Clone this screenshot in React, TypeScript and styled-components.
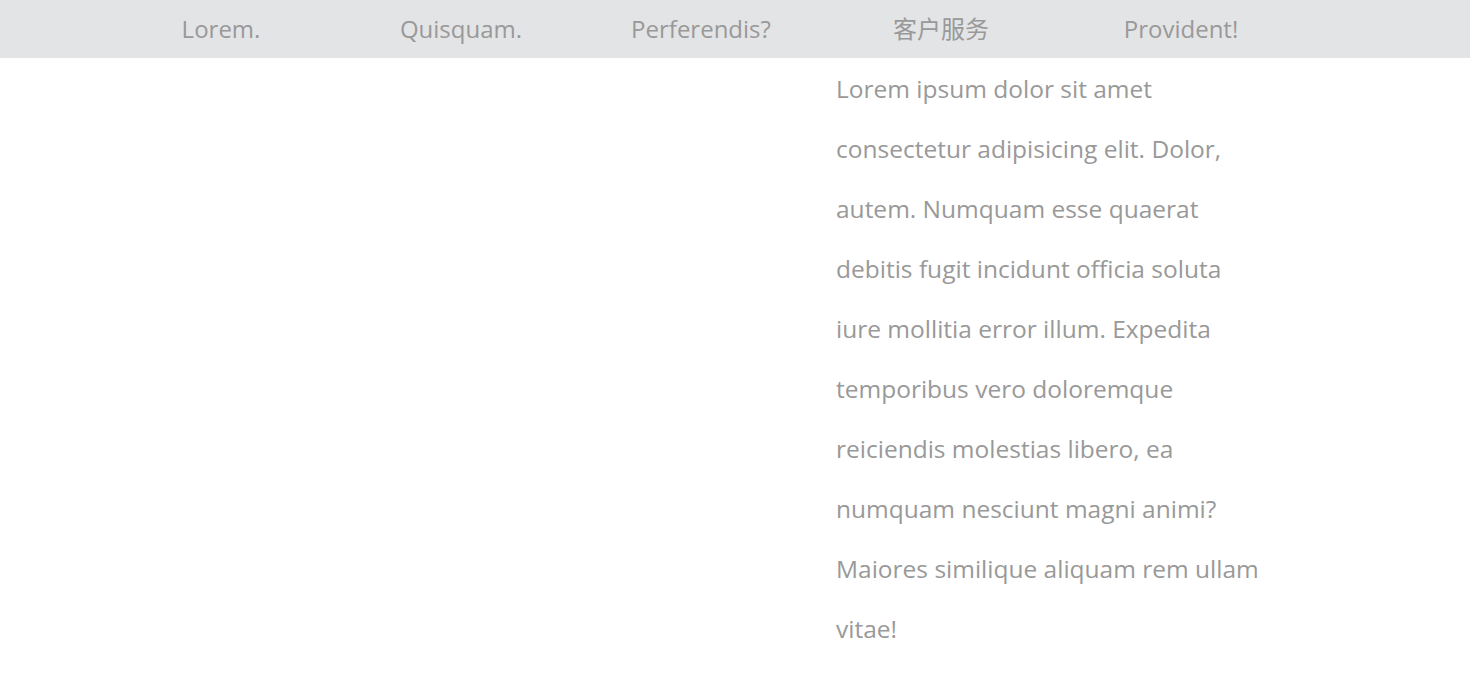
import React from "react";
import styled, { createGlobalStyle } from "styled-components";

const NAV_ITEMS = ["Lorem.", "Quisquam.", "Perferendis?", "客户服务", "Provident!"];

const TEXT =
  "Lorem ipsum dolor sit amet consectetur adipisicing elit. Dolor, autem. Numquam esse quaerat debitis fugit incidunt officia soluta iure mollitia error illum. Expedita temporibus vero doloremque reiciendis molestias libero, ea numquam nesciunt magni animi? Maiores similique aliquam rem ullam vitae!";

const GlobalStyle = createGlobalStyle`
  body {
    margin: 0;
    background: #fff;
    font-family: "Open Sans", "Noto Sans CJK SC", sans-serif;
    color: #999;
  }
`;

const App: React.FC = () => (
  <>
    <GlobalStyle />
    <Nav>
      <NavList>
        {NAV_ITEMS.map((item) => (
          <NavItem key={item}>{item}</NavItem>
        ))}
      </NavList>
    </Nav>
    <Main>
      <Paragraph>{TEXT}</Paragraph>
    </Main>
  </>
);

const Nav = styled.nav`
  height: 58px;
  background: #e3e4e6;
`;

const NavList = styled.ul`
  display: grid;
  grid-template-columns: repeat(5, 240px);
  margin: 0;
  padding: 0 0 0 101px;
  list-style: none;
`;

const NavItem = styled.li`
  height: 58px;
  line-height: 58px;
  text-align: center;
  font-size: 24px;
  color: #999;
`;

const Main = styled.main`
  display: grid;
  grid-template-columns: repeat(5, 240px);
  padding-left: 101px;
`;

const Paragraph = styled.p`
  grid-column: 4 / span 2;
  width: 430px;
  margin: 0;
  padding: 1px 0 0 15px;
  font-size: 24.5px;
  line-height: 60px;
  color: #999;
`;

export default App;
